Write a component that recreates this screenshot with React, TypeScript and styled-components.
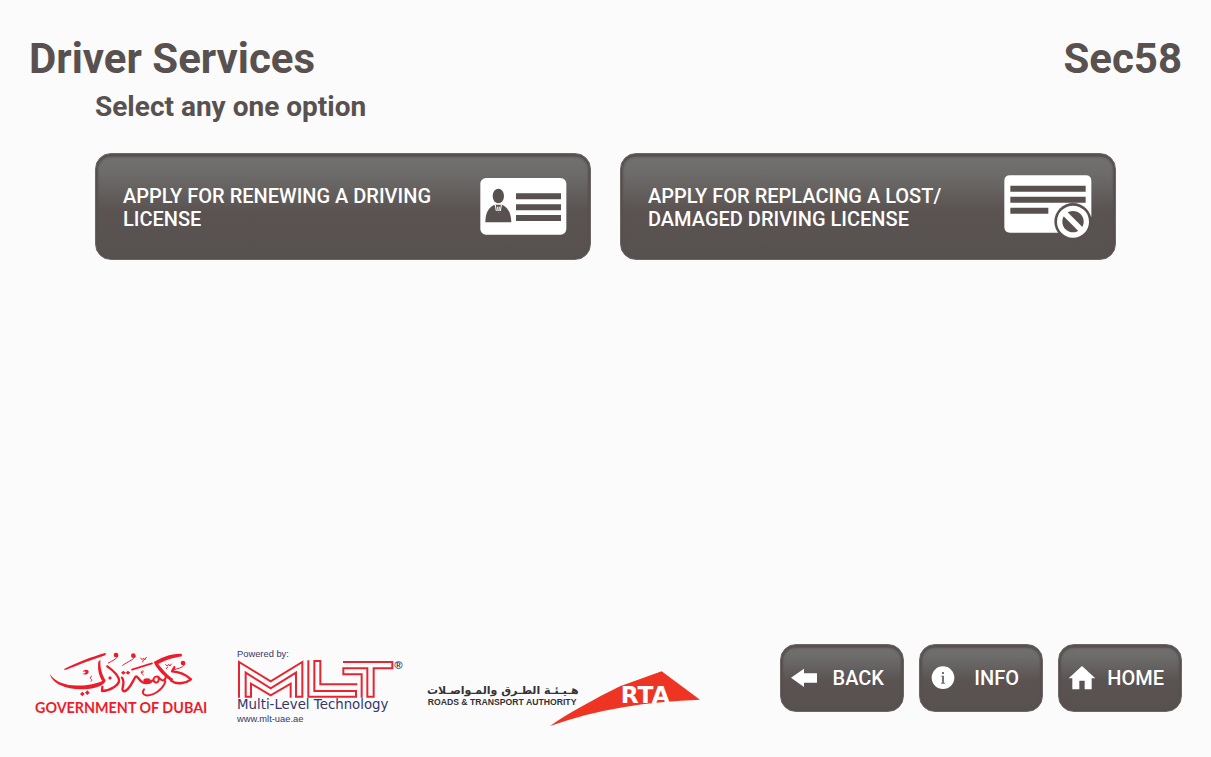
import React from "react";
import styled, { createGlobalStyle } from "styled-components";

const GlobalStyle = createGlobalStyle`
  *, *::before, *::after { box-sizing: border-box; }
  body {
    margin: 0;
    background: #fbfbfb;
    color: #585150;
    font-family: Roboto, "Liberation Sans", sans-serif;
  }
`;

const Page = styled.div`
  display: flex;
  flex-direction: column;
  min-height: 100vh;
  padding: 34px 29px 45px;
`;

const Header = styled.header`
  display: flex;
  justify-content: space-between;
  align-items: center;
`;

const Title = styled.h1`
  margin: 0;
  font-size: 42px;
  line-height: 50px;
  font-weight: 700;
`;

const ScreenCode = styled.span`
  font-size: 42px;
  line-height: 50px;
  font-weight: 700;
`;

const Main = styled.main`
  flex: 1;
  padding: 6px 66px 48px;
`;

const Prompt = styled.h2`
  margin: 0 0 29px;
  font-size: 28px;
  line-height: 34px;
  font-weight: 700;
`;

const Options = styled.div`
  display: grid;
  grid-template-columns: 1fr 1fr;
  gap: 29px;
`;

const GlossyButton = styled.button`
  display: flex;
  align-items: center;
  border: 1px solid #6d6665;
  border-radius: 16px;
  background: linear-gradient(#72716f 0, #6d6c6a 18%, #5a5352 54%, #575150 100%);
  box-shadow: inset 0 3px 2px #575150, inset 2px 0 2px #575150, inset -2px 0 2px #575150;
  color: #fff;
  font-family: inherit;
  font-size: 20px;
  font-weight: 500;
  cursor: pointer;
`;

const OptionButton = styled(GlossyButton)`
  justify-content: space-between;
  gap: 24px;
  min-height: 107px;
  padding: 0 23px 0 27px;
  line-height: 23px;
  text-align: left;
`;

const OptionLabel = styled.span`
  max-width: 310px;
  padding-top: 2px;
`;

const Footer = styled.footer`
  display: flex;
  justify-content: space-between;
  align-items: flex-end;
  gap: 24px;
`;

const Logo = styled.svg`
  display: block;
  flex: none;
  overflow: visible;
`;

const LogoStrip = styled.div`
  display: flex;
  align-items: flex-end;
  gap: 11px;
  margin-bottom: -18px;
`;

const PartnerLogos = styled.div`
  display: flex;
  align-items: flex-end;
  gap: 3px;
`;

const Actions = styled.nav`
  display: flex;
  gap: 15px;
`;

const ActionButton = styled(GlossyButton)`
  width: 124px;
  height: 68px;
  padding: 0 17px 0 9px;
  line-height: 24px;
`;

const ActionText = styled.span<{ $inset: number }>`
  flex: 1;
  padding-right: ${(p) => p.$inset}px;
  text-align: right;
`;

function LicenseIcon() {
  return (
    <Logo width="88" height="57" viewBox="-3 0 264 171" aria-hidden="true">
      <rect x="1" y="0" width="258" height="170" rx="17" fill="#fff" />
      <g fill="#585150">
        <ellipse cx="55" cy="54" rx="17" ry="22" />
        <path d="M16 133C17 107 22 91 43 80L55 104 67 80C86 90 93 106 94 133Z" />
        <path d="M46 80h18l3 22H43z" />
        <path d="M108 46h135v18H108zM108 79h135v18H108zM108 111h135v18H108z" />
      </g>
      <path d="M46 81l3 18M64 81l-3 18M53 86l1 13M58 86l-1 13" stroke="#fff" strokeWidth="3" />
    </Logo>
  );
}

function LostLicenseIcon() {
  return (
    <Logo width="88" height="63" viewBox="0 0 264 189" aria-hidden="true">
      <path
        d="M18 1H245Q262 1 262 18V125L207 140L162 173H18Q1 173 1 156V18Q1 1 18 1Z"
        fill="#fff"
      />
      <path
        d="M19 32h226v18H19zM19 65h226v18H19zM19 98h114v18H19z"
        fill="#585150"
      />
      <circle cx="207" cy="140" r="56" fill="#585150" />
      <circle cx="207" cy="140" r="40" fill="none" stroke="#fff" strokeWidth="16" />
      <path d="M179 112l56 56" stroke="#fff" strokeWidth="17" />
    </Logo>
  );
}

function BackIcon() {
  return (
    <Logo width="28" height="20" viewBox="0 0 84 60" aria-hidden="true">
      <path d="M3 29L42 2V16H81V44H42V57Z" fill="#fff" />
    </Logo>
  );
}

function InfoIcon() {
  return (
    <Logo width="28" height="24" viewBox="0 0 84 72" aria-hidden="true">
      <circle cx="42" cy="35" r="34" fill="#fff" />
      <path d="M39 18h6v6h-6zM37 29h8v21h3v3H36v-3h3V32h-2z" fill="#777170" />
    </Logo>
  );
}

function HomeIcon() {
  return (
    <Logo width="28" height="24" viewBox="0 0 84 72" aria-hidden="true">
      <path d="M42 0L82 37H71V70H50V44H34V70H13V37H2Z" fill="#fff" />
    </Logo>
  );
}

function DubaiLogo() {
  return (
    <Logo
      width="190"
      height="90"
      viewBox="27 0 570 270"
      role="img"
      aria-label="Government of Dubai"
    >
      <g fill="#ed1c2b">
        <path d="M131 88C165 69 215 50 258 38L256 46C215 59 175 75 136 90Z" />
        <path d="M89 101C101 121 126 133 158 136C196 139 226 132 247 123C237 108 232 88 235 65L241 59C240 86 247 106 257 121C255 132 242 139 225 143C191 151 148 149 122 136C102 126 93 114 89 101Z" />
        <path d="M188 94C194 87 206 88 206 95C206 103 194 106 187 101C194 100 199 97 196 95C193 94 191 96 188 94Z" />
        <path d="M401 66C420 54 452 40 485 41L486 49C455 54 432 63 415 72C430 92 447 110 460 117L455 124C435 112 411 90 401 66Z" />
        <ellipse cx="381" cy="122" rx="11" ry="7" />
        <circle cx="288" cy="45" r="7" />
        <circle cx="340" cy="47" r="7" />
        <circle cx="489" cy="69" r="7" />
        <path d="M180 162l7-7 7 7-7 7zM195 158l7-7 7 7-7 7zM264 114l6-6 6 6-6 6zM303 98l7-6 7 6-7 6zM317 98l7-6 7 6-7 6z" />
      </g>
      <g fill="none" stroke="#ed1c2b" strokeLinecap="round" strokeLinejoin="round">
        <path
          d="M262 79C276 89 293 105 297 118C300 135 270 152 246 153L247 141"
          strokeWidth="7"
        />
        <path
          d="M306 113C319 128 299 152 312 154C328 152 336 127 346 111C353 104 356 124 370 128C382 131 391 130 396 122"
          strokeWidth="7"
        />
        <path
          d="M414 110C401 108 395 122 406 127C415 130 419 120 414 110C427 128 437 122 438 107M436 124C431 147 400 168 378 166C366 163 367 155 372 148"
          strokeWidth="6"
        />
        <path
          d="M453 122C472 137 502 127 513 118C500 106 478 95 456 94L463 82"
          strokeWidth="7"
        />
        <path
          d="M294 48C289 59 278 61 265 69M346 49C341 60 322 65 308 76M494 72C487 87 472 83 461 91"
          strokeWidth="3"
        />
        <path d="M336 89L396 70" strokeWidth="5" />
        <path
          d="M362 54l4 5 5-5 3 6 5-8M370 60l-2 6M437 74l5 4 4-5 4 5 4-6M443 81l-4 5M365 98c7 2 6-7 1-5s-1 9 4 12M213 124c5-2 2-6-1-8s0-7 3-8"
          strokeWidth="3"
        />
      </g>
      <text
        x="45"
        y="218"
        fill="#ed1c2b"
        fontFamily="Lato, sans-serif"
        fontSize="43"
        fontWeight="700"
      >
        GOVERNMENT OF DUBAI
      </text>
    </Logo>
  );
}

function MltLogo() {
  return (
    <Logo
      width="182"
      height="90"
      viewBox="15 0 546 270"
      role="img"
      aria-label="MLT Multi-Level Technology"
    >
      <g fill="#35376b" fontFamily="'Liberation Sans', Arial, sans-serif">
        <text x="36" y="50" fontSize="28">Powered by:</text>
        <text x="36" y="208" fontSize="40" fontFamily="'DejaVu Sans', sans-serif">
          Multi-Level Technology
        </text>
        <text x="36" y="246" fontSize="28">www.mlt-uae.ae</text>
        <text x="508" y="86" fontSize="34" fontWeight="700">®</text>
      </g>
      <g fill="none" stroke="#e52630" strokeWidth="6">
        <path d="M42 173V66L137 124L232 66V170H213V98L137 145L62 98V170H78V131L137 166L197 131V173" />
        <path d="M250 61V170H393V153H268V63H286V133H397" />
        <path d="M354 66H502V85H446V170H427V85H355V103H410V173" />
      </g>
    </Logo>
  );
}

function RtaLogo() {
  return (
    <Logo
      width="285"
      height="70"
      viewBox="0 0 855 210"
      role="img"
      aria-label="Roads and Transport Authority"
    >
      <path
        d="M405 198C460 160 540 116 615 79L740 34L855 119C700 124 545 147 405 198Z"
        fill="#ee3524"
      />
      <g fill="#333">
        <text
          x="491"
          y="101"
          direction="rtl"
          textAnchor="start"
          fontFamily="'DejaVu Sans', sans-serif"
          fontSize="33"
          fontWeight="700"
        >
          هـيـئـة الطـرق والمـواصـلات
        </text>
        <text
          x="38"
          y="134"
          fontFamily="'Liberation Sans', Arial, sans-serif"
          fontSize="26"
          fontWeight="700"
        >
          ROADS &amp; TRANSPORT AUTHORITY
        </text>
      </g>
      <text
        x="617"
        y="129"
        fill="#fff"
        fontFamily="'DejaVu Sans', sans-serif"
        fontSize="70"
        fontWeight="700"
      >
        RTA
      </text>
    </Logo>
  );
}

export default function App() {
  return (
    <>
      <GlobalStyle />
      <Page>
        <Header>
          <Title>Driver Services</Title>
          <ScreenCode>Sec58</ScreenCode>
        </Header>
        <Main>
          <Prompt>Select any one option</Prompt>
          <Options>
            <OptionButton type="button">
              <OptionLabel>APPLY FOR RENEWING A DRIVING LICENSE</OptionLabel>
              <LicenseIcon />
            </OptionButton>
            <OptionButton type="button">
              <OptionLabel>APPLY FOR REPLACING A LOST/ DAMAGED DRIVING LICENSE</OptionLabel>
              <LostLicenseIcon />
            </OptionButton>
          </Options>
        </Main>
        <Footer>
          <LogoStrip>
            <DubaiLogo />
            <PartnerLogos>
              <MltLogo />
              <RtaLogo />
            </PartnerLogos>
          </LogoStrip>
          <Actions aria-label="Kiosk navigation">
            <ActionButton type="button">
              <BackIcon />
              <ActionText $inset={2}>BACK</ActionText>
            </ActionButton>
            <ActionButton type="button">
              <InfoIcon />
              <ActionText $inset={6}>INFO</ActionText>
            </ActionButton>
            <ActionButton type="button">
              <HomeIcon />
              <ActionText $inset={0}>HOME</ActionText>
            </ActionButton>
          </Actions>
        </Footer>
      </Page>
    </>
  );
}
